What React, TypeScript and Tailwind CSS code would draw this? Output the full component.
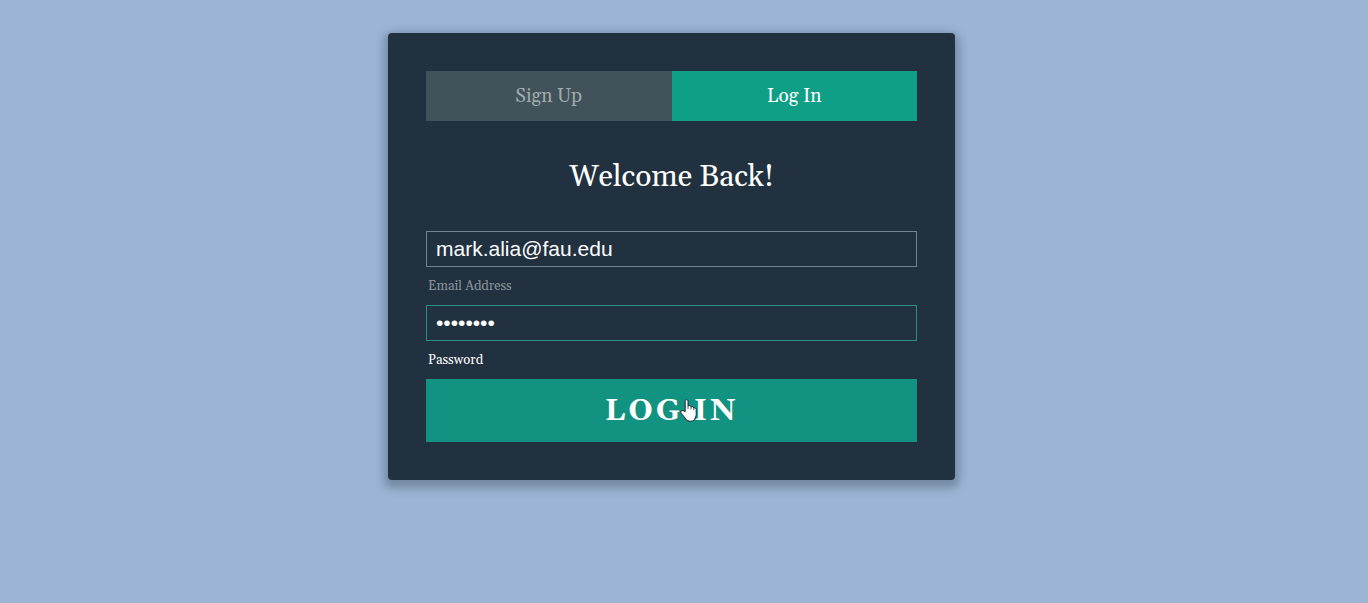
import { useState } from "react";

type FieldProps = {
  id: string;
  label: string;
  type: string;
  initial: string;
  inputClass: string;
  labelClass: string;
};

function Field({ id, label, type, initial, inputClass, labelClass }: FieldProps) {
  const [value, setValue] = useState(initial);
  return (
    <div className="flex flex-col">
      <input
        id={id}
        type={type}
        value={value}
        onChange={(e) => setValue(e.target.value)}
        className={`h-9 w-full border bg-transparent px-[9px] font-['Liberation_Sans',Arial,sans-serif] text-[21px] text-white outline-none ${inputClass}`}
      />
      <label htmlFor={id} className={`flex h-[38px] items-center pt-0.5 pl-0.5 text-[13px] ${labelClass}`}>
        {label}
      </label>
    </div>
  );
}

function HandCursor() {
  return (
    <svg
      aria-hidden="true"
      viewBox="0 0 17 23"
      className="pointer-events-none absolute top-5 left-1/2 ml-2 h-[23px] w-[17px]"
    >
      <path
        d="M5.2 12.5V2.2C5.2 .2 8 .2 8 2.2V7C9 6.2 10.8 6.6 11 7.8C12 7.2 13.6 7.6 13.8 8.9C14.8 8.5 16.2 9.1 16.2 10.6V15.5C16.2 17.5 15.2 18.6 14.6 20.2C14.1 21.6 12.8 22.2 10.8 22.2C8.3 22.2 7 21.6 5.8 20C4.4 18 3.1 16.5 1.1 14.2C-.1 12.4 1.5 10.9 3.1 11.7Z"
        fill="#fff"
        stroke="#16252c"
        strokeWidth="1"
        strokeLinejoin="round"
      />
      <path d="M8 7V10M11 7.8V10.4M13.8 9V11" fill="none" stroke="#16252c" strokeWidth="0.8" />
    </svg>
  );
}

export default function App() {
  return (
    <main className="min-h-screen bg-[#9cb5d5] py-[33px] pr-[41px] pl-4 font-[Georgia,Gelasio,'Liberation_Serif',serif]">
      <section className="mx-auto w-full max-w-[567px] rounded bg-[#21313f] p-[38px] shadow-[0_4px_10px_4px_rgba(19,35,47,0.3)]">
        <nav className="grid grid-cols-2 text-[19px]">
          <a href="#signup" className="flex h-[50px] items-center justify-center bg-[#42525b] text-[#a0aaac]">
            Sign Up
          </a>
          <a href="#login" className="flex h-[50px] items-center justify-center bg-[#0f9f86] text-white">
            Log In
          </a>
        </nav>
        <h1 className="flex h-[110px] items-center justify-center pt-0.5 text-[30px] text-white">Welcome Back!</h1>
        <form onSubmit={(e) => e.preventDefault()}>
          <Field
            id="email"
            label="Email Address"
            type="email"
            initial="mark.alia@fau.edu"
            inputClass="border-[#71868c]"
            labelClass="text-[#8a949b]"
          />
          <Field
            id="password"
            label="Password"
            type="password"
            initial="password"
            inputClass="border-[#2b8e83]"
            labelClass="text-white"
          />
          <button
            type="submit"
            className="relative flex h-[63px] w-full items-center justify-center bg-[#129280] pt-0.5 text-[30px] font-bold tracking-widest text-white"
          >
            LOG IN
            <HandCursor />
          </button>
        </form>
      </section>
    </main>
  );
}
